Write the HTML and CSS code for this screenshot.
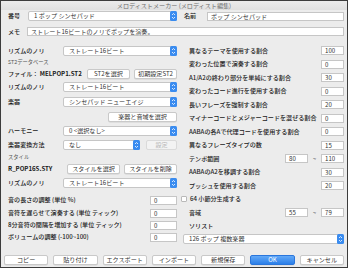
FILE: index.html
```html
<!DOCTYPE html>
<html lang="ja">
<head>
    <meta charset="UTF-8">
    <title>メロディストメーカー</title>
    <link rel="stylesheet" href="styles.css">
</head>
<body>
<div class="window">
    <div class="titlebar">メロディストメーカー (メロディスト編集)</div>

    <div class="content">
        <div class="top-row">
            <span class="label w-num">番号</span>
            <div class="select sel-num"><span>1 ポップ シンセパッド</span><svg class="arrows" viewBox="0 0 7 10"><rect width="7" height="10" rx="1.5" fill="#3a8cf0"/><path d="M2 4 L3.5 2.5 L5 4 M2 6 L3.5 7.5 L5 6" stroke="#fff" stroke-width="0.8" fill="none"/></svg></div>
            <span class="label w-name">名前</span>
            <div class="field grow">ポップ シンセパッド</div>
        </div>
        <div class="memo-row">
            <span class="label w-memo">メモ</span>
            <div class="field grow">ストレート16ビートのノリでポップを演奏。</div>
        </div>

        <div class="columns">
            <!-- left column -->
            <div class="left">
                <div class="lrow m2">
                    <span class="label w-left">リズムのノリ</span>
                    <div class="select grow"><span>ストレート16ビート</span><svg class="arrows" viewBox="0 0 7 10"><rect width="7" height="10" rx="1.5" fill="#3a8cf0"/><path d="M2 4 L3.5 2.5 L5 4 M2 6 L3.5 7.5 L5 6" stroke="#fff" stroke-width="0.8" fill="none"/></svg></div>
                </div>
                <div class="heading">ST2データベース</div>
                <div class="lrow m3">
                    <span class="label">ファイル： <b>MELPOP1.ST2</b></span>
                    <div class="btns">
                        <div class="btn w43">ST2を選択</div>
                        <div class="btn w43">初期設定ST2</div>
                    </div>
                </div>
                <div class="lrow m3">
                    <span class="label w-left">リズムのノリ</span>
                    <div class="select grow"><span>ストレート16ビート</span><svg class="arrows" viewBox="0 0 7 10"><rect width="7" height="10" rx="1.5" fill="#3a8cf0"/><path d="M2 4 L3.5 2.5 L5 4 M2 6 L3.5 7.5 L5 6" stroke="#fff" stroke-width="0.8" fill="none"/></svg></div>
                </div>
                <div class="lrow m5">
                    <span class="label w-left">楽器</span>
                    <div class="select grow"><span>シンセパッド ニューエイジ</span><svg class="arrows" viewBox="0 0 7 10"><rect width="7" height="10" rx="1.5" fill="#3a8cf0"/><path d="M2 4 L3.5 2.5 L5 4 M2 6 L3.5 7.5 L5 6" stroke="#fff" stroke-width="0.8" fill="none"/></svg></div>
                </div>
                <div class="lrow m5 end">
                    <div class="btn w69">楽器と音域を選択</div>
                </div>
                <div class="lrow m4">
                    <span class="label w-left">ハーモニー</span>
                    <div class="select grow"><span>0 &lt;選択なし&gt;</span><svg class="arrows" viewBox="0 0 7 10"><rect width="7" height="10" rx="1.5" fill="#3a8cf0"/><path d="M2 4 L3.5 2.5 L5 4 M2 6 L3.5 7.5 L5 6" stroke="#fff" stroke-width="0.8" fill="none"/></svg></div>
                </div>
                <div class="lrow m4">
                    <span class="label w-left">楽器変換方法</span>
                    <div class="select w77"><span>なし</span><svg class="arrows" viewBox="0 0 7 10"><rect width="7" height="10" rx="1.5" fill="#3a8cf0"/><path d="M2 4 L3.5 2.5 L5 4 M2 6 L3.5 7.5 L5 6" stroke="#fff" stroke-width="0.8" fill="none"/></svg></div>
                    <div class="btn disabled w31">設定</div>
                </div>
                <div class="heading h-style">スタイル</div>
                <div class="lrow m3">
                    <span class="label"><b>R_POP16S.STY</b></span>
                    <div class="btns">
                        <div class="btn w53">スタイルを選択</div>
                        <div class="btn w53">スタイルを削除</div>
                    </div>
                </div>
                <div class="lrow m4">
                    <span class="label w-left">リズムのノリ</span>
                    <div class="select grow"><span>ストレート16ビート</span><svg class="arrows" viewBox="0 0 7 10"><rect width="7" height="10" rx="1.5" fill="#3a8cf0"/><path d="M2 4 L3.5 2.5 L5 4 M2 6 L3.5 7.5 L5 6" stroke="#fff" stroke-width="0.8" fill="none"/></svg></div>
                </div>
                <div class="lrow m7">
                    <span class="label grow">音の長さの調整 (単位 %)</span>
                    <div class="field w27">0</div>
                </div>
                <div class="lrow m3">
                    <span class="label grow">音符を遅らせて演奏する (単位 ティック)</span>
                    <div class="field w27">0</div>
                </div>
                <div class="lrow m2">
                    <span class="label grow">8分音符の間隔を増加する (単位 ティック)</span>
                    <div class="field w27">0</div>
                </div>
                <div class="lrow m2">
                    <span class="label grow">ボリュームの調整 (-100~100)</span>
                    <div class="field w27">0</div>
                </div>
            </div>

            <!-- right column -->
            <div class="right">
                <div class="rrow"><span class="label grow">異なるテーマを使用する割合</span><div class="field w23">100</div></div>
                <div class="rrow"><span class="label grow">変わった位置で演奏する割合</span><div class="field w23">0</div></div>
                <div class="rrow"><span class="label grow">A1/A2の終わり部分を単純にする割合</span><div class="field w23">30</div></div>
                <div class="rrow"><span class="label grow">変わったコード進行を使用する割合</span><div class="field w23">0</div></div>
                <div class="rrow"><span class="label grow">長いフレーズを強制する割合</span><div class="field w23">20</div></div>
                <div class="rrow"><span class="label grow">マイナーコードとメジャーコードを混ぜる割合</span><div class="field w23">0</div></div>
                <div class="rrow"><span class="label grow">AABAの各Aで代理コードを使用する割合</span><div class="field w23">0</div></div>
                <div class="rrow"><span class="label grow">異なるフレーズタイプの数</span><div class="field w23">15</div></div>
                <div class="rrow"><span class="label grow">テンポ範囲</span><div class="field w23">80</div><span class="tilde">~</span><div class="field w23">110</div></div>
                <div class="rrow"><span class="label grow">AABAのA2を移調する割合</span><div class="field w23">30</div></div>
                <div class="rrow"><span class="label grow">プッシュを使用する割合</span><div class="field w23">20</div></div>
                <div class="rrow check-row"><span class="checkbox"></span><span class="label">64 小節分生成する</span></div>
                <div class="rrow"><span class="label grow">音域</span><div class="field w23">55</div><span class="tilde">~</span><div class="field w23">79</div></div>
                <div class="rrow"><span class="label">ソリスト</span></div>
                <div class="select soloist"><span>126 ポップ 複数楽器</span><svg class="arrows" viewBox="0 0 7 10"><rect width="7" height="10" rx="1.5" fill="#3a8cf0"/><path d="M2 4 L3.5 2.5 L5 4 M2 6 L3.5 7.5 L5 6" stroke="#fff" stroke-width="0.8" fill="none"/></svg></div>
            </div>
        </div>
    </div>

    <div class="footer">
        <div class="btn">コピー</div>
        <div class="btn">貼り付け</div>
        <div class="btn">エクスポート</div>
        <div class="btn">インポート</div>
        <div class="btn">新規保存</div>
        <div class="btn primary">OK</div>
        <div class="btn">キャンセル</div>
    </div>
</div>
</body>
</html>
```

FILE: styles.css
```css
body {
    margin: 0;
    background: #ececec;
}

.window {
    width: 348px;
    height: 268px;
    box-sizing: border-box;
    border: 1px solid #3c3c3c;
    background: #ececec;
    font-family: "Noto Sans CJK JP", sans-serif;
    font-size: 6.1px;
    line-height: 8px;
    color: #222;
    display: flex;
    flex-direction: column;
}

.titlebar {
    height: 9px;
    line-height: 9px;
    text-align: center;
    color: #6a6a6a;
    background: linear-gradient(#ebebeb, #e0e0e0);
}

.content {
    flex: 1;
    padding: 0 3px 0 7px;
}

/* top rows */
.top-row, .memo-row {
    display: flex;
    align-items: center;
}
.top-row { margin-top: 1px; }
.memo-row { margin-top: 6px; }

.w-num { width: 20px; }
.w-name { width: 23px; margin-left: 7px; }
.w-memo { width: 19px; }
.sel-num { width: 149px; }

.label {
    white-space: nowrap;
    color: #1a1a1a;
    font-weight: 500;
}
.label b { font-weight: bold; }
.grow { flex: 1; }

/* controls */
.select {
    display: flex;
    align-items: center;
    height: 10px;
    box-sizing: border-box;
    background: #fff;
    border: 1px solid #c6c6c6;
    border-radius: 2px;
    padding-left: 5px;
    color: #333;
}
.select span { flex: 1; white-space: nowrap; }
.arrows {
    width: 7px;
    height: 10px;
    margin-right: -1px;
    flex: none;
}

.field {
    height: 9px;
    box-sizing: border-box;
    background: #fff;
    border: 1px solid #c6c6c6;
    padding-left: 3px;
    line-height: 7px;
    color: #333;
    white-space: nowrap;
}

.btn {
    height: 10px;
    box-sizing: border-box;
    background: #fff;
    border: 1px solid #c9c9c9;
    border-radius: 2px;
    display: flex;
    align-items: center;
    justify-content: center;
    white-space: nowrap;
    color: #333;
    box-shadow: 0 0.5px 0.5px rgba(0, 0, 0, 0.12);
}
.btn.disabled {
    background: #f3f3f3;
    color: #b8b8b8;
    border-color: #dadada;
    box-shadow: none;
    margin-left: 6px;
}
.btn.primary {
    background: linear-gradient(#62a9f8, #2c7fe8);
    border-color: #2a76dc;
    color: #fff;
}

.w23 { width: 23px; }
.w27 { width: 27px; }
.w31 { width: 31px; }
.w43 { width: 43px; }
.w53 { width: 53px; }
.w69 { width: 69px; }
.w77 { width: 77px; }

/* columns */
.columns {
    display: grid;
    grid-template-columns: 170px 163px;
    column-gap: 3px;
    margin-top: 8px;
}

.left { padding-right: 1px; }

.lrow {
    display: flex;
    align-items: center;
    height: 10px;
}
.lrow.end { justify-content: flex-end; }
.w-left { width: 55px; }

.m2 { margin-top: 2px; }
.m3 { margin-top: 3px; }
.m4 { margin-top: 4px; }
.m5 { margin-top: 5px; }
.m7 { margin-top: 7px; }

.btns {
    margin-left: auto;
    display: flex;
    gap: 4px;
}

.heading {
    margin-top: 2px;
    height: 8px;
    line-height: 8px;
    font-size: 5.3px;
    color: #555;
}
.h-style { margin-top: 3px; }

.right { padding-left: 8px; }

.rrow {
    display: flex;
    align-items: center;
    height: 13.5px;
}
.tilde {
    width: 13px;
    text-align: center;
    color: #444;
}
.check-row { margin-left: -8px; }
.checkbox {
    width: 6px;
    height: 6px;
    box-sizing: border-box;
    background: #fff;
    border: 1px solid #b9b9b9;
    border-radius: 1px;
    margin-right: 3px;
}
.soloist {
    margin-top: 1px;
    margin-left: -6px;
}

.footer {
    display: flex;
    gap: 5px;
    padding: 0 3px;
    margin-bottom: 2px;
}
.footer .btn { flex: 1; }
```
